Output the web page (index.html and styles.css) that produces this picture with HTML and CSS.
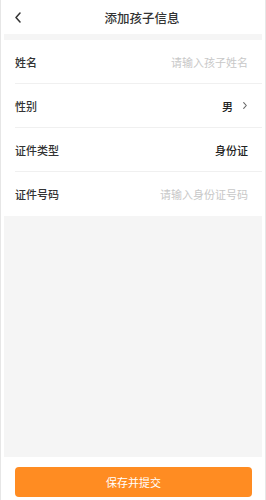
FILE: index.html
```html
<!DOCTYPE html>
<html lang="zh-CN">
<head>
    <meta charset="UTF-8">
    <meta name="viewport" content="width=device-width, initial-scale=1.0">
    <title>添加孩子信息</title>
    <link rel="stylesheet" href="styles.css">
</head>
<body>
    <div class="frame">
        <header class="nav-bar">
            <span class="nav-back">
                <svg viewBox="0 0 6 11" width="6" height="11" fill="none" stroke="#333" stroke-width="1.5" stroke-linecap="round" stroke-linejoin="round">
                    <path d="M5 1 L1 5.5 L5 10"></path>
                </svg>
            </span>
            <h1 class="nav-title">添加孩子信息</h1>
        </header>

        <div class="gap-band"></div>

        <ul class="form-list">
            <li class="form-row">
                <span class="row-label">姓名</span>
                <span class="row-placeholder">请输入孩子姓名</span>
            </li>
            <li class="form-row">
                <span class="row-label">性别</span>
                <span class="row-value">
                    男
                    <svg class="row-arrow" viewBox="0 0 4 7" width="4" height="7" fill="none" stroke="#666" stroke-width="1.1" stroke-linecap="round" stroke-linejoin="round">
                        <path d="M0.7 0.7 L3.3 3.5 L0.7 6.3"></path>
                    </svg>
                </span>
            </li>
            <li class="form-row">
                <span class="row-label">证件类型</span>
                <span class="row-value">身份证</span>
            </li>
            <li class="form-row">
                <span class="row-label">证件号码</span>
                <span class="row-placeholder">请输入身份证号码</span>
            </li>
        </ul>

        <div class="filler"></div>

        <footer class="footer">
            <button type="button" class="submit-btn">保存并提交</button>
        </footer>
    </div>
</body>
</html>
```

FILE: styles.css
```css
/* Page reset */
* {
    box-sizing: border-box;
}
body {
    margin: 0;
    font-family: "Noto Sans CJK SC", "Noto Sans", sans-serif;
    color: #333;
    background-color: #fff;
}

/* Outer phone frame */
.frame {
    width: 266px;
    height: 500px;
    border-left: 1px solid #e6e6e6;
    border-right: 1px solid #e6e6e6;
    padding: 0 3px;
    display: flex;
    flex-direction: column;
    overflow: hidden;
}

/* Navigation bar */
.nav-bar {
    position: relative;
    height: 34px;
    display: flex;
    align-items: center;
    justify-content: center;
    padding-left: 18px; /* title sits right of centre, after the back arrow */
    flex-shrink: 0;
}
.nav-back {
    position: absolute;
    left: 11px;
    top: 12px;
    display: flex;
}
.nav-title {
    margin: 0;
    font-size: 12.5px;
    font-weight: 500;
    color: #333;
}

.gap-band {
    height: 6px;
    background-color: #f5f5f5;
    flex-shrink: 0;
}

/* Form rows */
.form-list {
    list-style: none;
    margin: 0;
    padding: 0 0 0 11px;
    flex-shrink: 0;
}
.form-row {
    height: 44px;
    display: flex;
    align-items: center;
    justify-content: space-between;
    padding-right: 14px;
    border-bottom: 1px solid #f0f0f0;
    font-size: 11px;
}
.form-row:last-child {
    border-bottom: none;
}
.row-label {
    color: #333;
    font-weight: 500;
}
.row-placeholder {
    color: #c8c8c8;
}
.row-value {
    display: flex;
    align-items: center;
    color: #222;
    font-weight: 500;
}
.row-arrow {
    margin-left: 10px;
    margin-right: 1px;
}

/* Gray empty area */
.filler {
    flex: 1;
    background-color: #f5f5f5;
}

/* Bottom button */
.footer {
    flex-shrink: 0;
    padding: 10px 10px 3px 11px;
}
.submit-btn {
    width: 100%;
    height: 30px;
    border: none;
    border-radius: 4px;
    background-color: #ff8c22;
    color: #fff;
    font-family: inherit;
    font-size: 11px;
    display: block;
}
```
